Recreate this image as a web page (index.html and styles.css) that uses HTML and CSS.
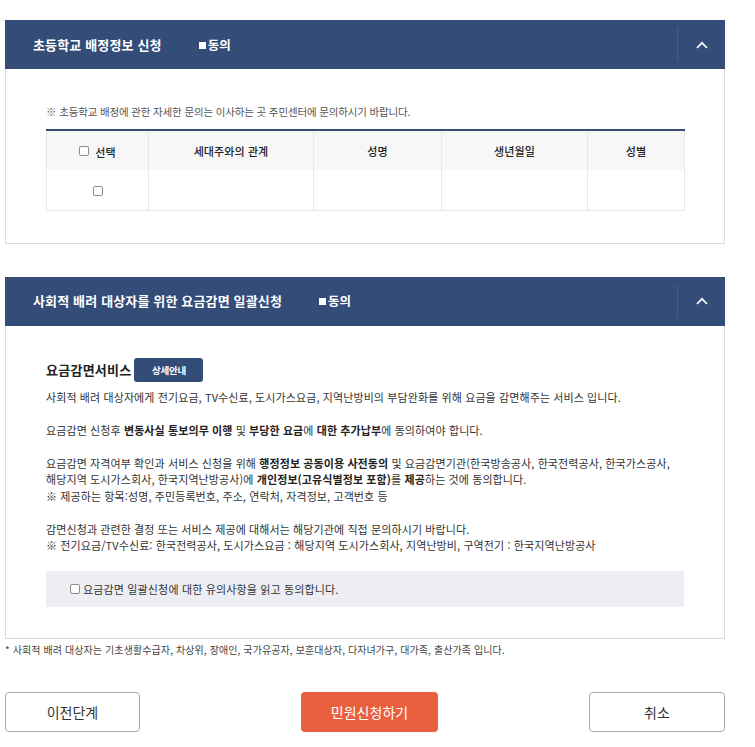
FILE: index.html
```html
<!DOCTYPE html>
<html lang="ko">
<head>
<meta charset="utf-8">
<title>민원신청</title>
<link rel="stylesheet" href="styles.css">
</head>
<body>
<div class="page">
  <section class="panel">
    <div class="panel-head">
      <h2 class="panel-title">초등학교 배정정보 신청</h2>
      <span class="agree"><i class="sq"></i>동의</span>
      <span class="toggle"><svg width="12" height="8" viewBox="0 0 12 8"><polyline points="1,7 6,1.8 11,7" fill="none" stroke="#fff" stroke-width="1.7"/></svg></span>
    </div>
    <div class="panel-body body-1">
      <p class="note">※ 초등학교 배정에 관한 자세한 문의는 이사하는 곳 주민센터에 문의하시기 바랍니다.</p>
      <table class="tbl">
        <colgroup>
          <col class="c1"><col class="c2"><col class="c3"><col class="c4"><col class="c5">
        </colgroup>
        <thead>
          <tr>
            <th><input type="checkbox" class="chk"><span class="chk-label">선택</span></th>
            <th>세대주와의 관계</th>
            <th>성명</th>
            <th>생년월일</th>
            <th>성별</th>
          </tr>
        </thead>
        <tbody>
          <tr>
            <td><input type="checkbox" class="chk"></td>
            <td></td>
            <td></td>
            <td></td>
            <td></td>
          </tr>
        </tbody>
      </table>
    </div>
  </section>

  <section class="panel panel-2">
    <div class="panel-head">
      <h2 class="panel-title">사회적 배려 대상자를 위한 요금감면 일괄신청</h2>
      <span class="agree"><i class="sq"></i>동의</span>
      <span class="toggle"><svg width="12" height="8" viewBox="0 0 12 8"><polyline points="1,7 6,1.8 11,7" fill="none" stroke="#fff" stroke-width="1.7"/></svg></span>
    </div>
    <div class="panel-body body-2">
      <div class="svc-row">
        <h3 class="svc-title">요금감면서비스</h3>
        <span class="btn-detail">상세안내</span>
      </div>
      <p class="txt">사회적 배려 대상자에게 전기요금, TV수신료, 도시가스요금, 지역난방비의 부담완화를 위해 요금을 감면해주는 서비스 입니다.</p>
      <p class="txt">요금감면 신청후 <b>변동사실 통보의무 이행</b> 및 <b>부당한 요금</b>에 <b>대한 추가납부</b>에 동의하여야 합니다.</p>
      <p class="txt">요금감면 자격여부 확인과 서비스 신청을 위해 <b>행정정보 공동이용 사전동의</b> 및 요금감면기관(한국방송공사, 한국전력공사, 한국가스공사,<br>해당지역 도시가스회사, 한국지역난방공사)에 <b>개인정보(고유식별정보 포함)</b>를 <b>제공</b>하는 것에 동의합니다.<br>※ 제공하는 항목:성명, 주민등록번호, 주소, 연락처, 자격정보, 고객번호 등</p>
      <p class="txt">감면신청과 관련한 결정 또는 서비스 제공에 대해서는 해당기관에 직접 문의하시기 바랍니다.<br>※ 전기요금/TV수신료: 한국전력공사, 도시가스요금 : 해당지역 도시가스회사, 지역난방비, 구역전기 : 한국지역난방공사</p>
      <label class="agree-box"><input type="checkbox" class="chk"><span>요금감면 일괄신청에 대한 유의사항을 읽고 동의합니다.</span></label>
    </div>
  </section>

  <p class="foot">* 사회적 배려 대상자는 기초생활수급자, 차상위, 장애인, 국가유공자, 보훈대상자, 다자녀가구, 대가족, 출산가족 입니다.</p>

  <div class="btns">
    <button class="btn btn-line">이전단계</button>
    <button class="btn btn-main">민원신청하기</button>
    <button class="btn btn-line btn-last">취소</button>
  </div>
</div>
</body>
</html>
```

FILE: styles.css
```css
* { box-sizing: border-box; }
html, body { margin: 0; padding: 0; background: #fff; }
body {
  font-family: "Noto Sans CJK KR", "Noto Sans", sans-serif;
  color: #333;
}
.page {
  width: 725px;
  padding: 20px 0 0 5px;
}
.panel { width: 720px; }
.panel-2 { margin-top: 33px; }
.panel-head {
  height: 49px;
  background: #344c78;
  display: flex;
  align-items: center;
  padding-left: 28px;
}
.panel-title {
  margin: 0;
  color: #fff;
  font-size: 13px;
  font-weight: 700;
  letter-spacing: 0.15px;
  line-height: 18px;
}
.agree {
  margin-left: 37px;
  color: #fff;
  font-size: 12.5px;
  font-weight: 700;
  letter-spacing: 0;
  display: flex;
  align-items: center;
  line-height: 16px;
}
.sq {
  display: inline-block;
  width: 7px;
  height: 7px;
  background: #fff;
  margin-right: 2px;
  margin-top: 1px;
}
.toggle {
  margin-left: auto;
  width: 48px;
  height: 33px;
  border-left: 1px solid #4a5f88;
  display: flex;
  align-items: center;
  justify-content: center;
}
.panel-body {
  border: 1px solid #dcdcdc;
  border-top: 0;
  padding: 0 40px;
}
.body-1 { padding-top: 35px; padding-bottom: 32px; }
.note {
  margin: 0 0 9px;
  font-size: 10.5px;
  line-height: 16px;
  letter-spacing: -0.15px;
  color: #555;
}
.tbl {
  width: 638px;
  border-collapse: collapse;
  table-layout: fixed;
  border-top: 2px solid #344c78;
}
.c1 { width: 102px; }
.c2 { width: 165px; }
.c3 { width: 128px; }
.c4 { width: 146px; }
.c5 { width: 97px; }
.tbl th {
  height: 40px;
  background: #f7f7f7;
  font-size: 11px;
  font-weight: 500;
  color: #222;
  letter-spacing: 0.1px;
  border-left: 1px solid #e8e8e8;
  border-right: 1px solid #e8e8e8;
  padding: 0;
  text-align: center;
  vertical-align: middle;
}
.tbl td {
  height: 40px;
  border: 1px solid #e8e8e8;
  border-top: 0;
  padding: 0;
  text-align: center;
  vertical-align: middle;
}
.chk {
  -webkit-appearance: none;
  appearance: none;
  width: 10px;
  height: 10px;
  margin: 0;
  border: 1px solid #8c8c8c;
  border-radius: 2px;
  background: #fff;
  vertical-align: middle;
  position: relative;
  top: -1px;
}
.chk-label { margin-left: 6px; vertical-align: middle; }

.body-2 { padding-top: 32px; padding-bottom: 31px; }
.svc-row {
  display: flex;
  align-items: center;
  height: 24px;
}
.svc-title {
  margin: 0;
  font-size: 13px;
  font-weight: 700;
  letter-spacing: 0.25px;
  color: #222;
  line-height: 18px;
}
.btn-detail {
  margin-left: 3px;
  width: 69px;
  height: 24px;
  border-radius: 3px;
  background: #344c78;
  color: #fff;
  font-size: 9.5px;
  font-weight: 700;
  letter-spacing: -0.2px;
  display: flex;
  align-items: center;
  justify-content: center;
}
.txt {
  margin: 0 0 16.5px;
  font-size: 11px;
  line-height: 16.5px;
  letter-spacing: 0.1px;
  color: #333;
}
.svc-row + .txt { margin-top: 7px; }
.txt b { font-weight: 700; color: #222; }
.agree-box {
  margin-top: 17px;
  height: 36px;
  background: #edeef3;
  display: flex;
  align-items: center;
  padding-left: 24px;
  font-size: 11px;
  letter-spacing: 0.15px;
  color: #333;
}
.agree-box .chk { top: 0; margin-right: 3px; }
.foot {
  margin: 4px 0 0;
  font-size: 10px;
  line-height: 14px;
  letter-spacing: 0.1px;
  color: #444;
}
.btns {
  display: flex;
  width: 720px;
  margin-top: 35px;
}
.btn {
  height: 40px;
  border-radius: 4px;
  font-family: "Noto Sans CJK KR", "Noto Sans", sans-serif;
  font-size: 14px;
  padding: 0;
  cursor: pointer;
}
.btn-line {
  width: 135px;
  background: #fff;
  border: 1px solid #aaa;
  color: #333;
}
.btn-main {
  width: 137px;
  margin-left: 161px;
  background: #e95f40;
  border: 0;
  color: #fff;
}
.btn-last { margin-left: auto; width: 136px; }
```
